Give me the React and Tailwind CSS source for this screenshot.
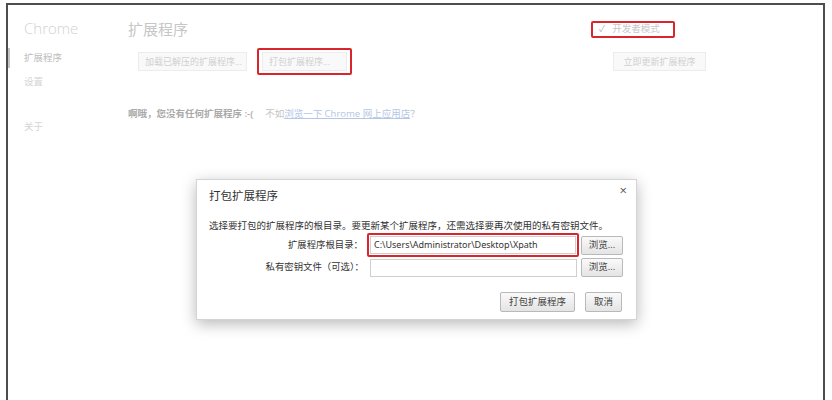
const cjk = { fontFamily: '"Open Sans", "Noto Sans CJK SC", sans-serif' };

function FadedButton({ children, className = "" }) {
  return (
    <div className={`flex h-[19px] items-center whitespace-nowrap border border-[#ececec] bg-[#f9f9f9] px-[6px] text-[9px] text-[#d0d0d0] ${className}`}>
      {children}
    </div>
  );
}

function DialogButton({ children, className = "" }) {
  return (
    <div className={`flex items-center justify-center whitespace-nowrap rounded-[2px] border border-[#b9b9b9] bg-gradient-to-b from-[#fafafa] to-[#e4e4e4] text-[9.5px] text-[#444] ${className}`}>
      {children}
    </div>
  );
}

function PackDialog() {
  return (
    <div className="absolute left-[196px] top-[179px] h-[141px] w-[441px] border border-[#d4d4d4] bg-white pl-[12px] shadow-[0_4px_14px_rgba(0,0,0,0.28)]">
      <div className="absolute right-[9px] top-[4px] text-[13px] leading-none text-[#555]">×</div>
      <div className="pt-[8px] text-[11.5px] leading-[16px] text-[#333]">打包扩展程序</div>
      <div className="mt-[15px] whitespace-nowrap text-[9.5px] leading-[14px] text-[#333]">选择要打包的扩展程序的根目录。要更新某个扩展程序，还需选择要再次使用的私有密钥文件。</div>
      <div className="flex h-[24px] items-center whitespace-nowrap text-[9.4px] text-[#333]">
        <div className="w-[158px] pr-[4px] text-right">扩展程序根目录：</div>
        <div className="h-[24px] w-[212px] rounded-[2px] border-2 border-[#d8262c] p-[1px]">
          <div className="flex h-full items-center border border-[#cfcfcf] px-[3px] text-[9px] text-[#333]" style={{ fontFamily: '"Noto Sans", sans-serif' }}>
            C:\Users\Administrator\Desktop\Xpath
          </div>
        </div>
        <DialogButton className="ml-[2px] h-[19px] w-[42px]">浏览...</DialogButton>
      </div>
      <div className="mt-[1px] flex h-[19px] items-center whitespace-nowrap text-[9.4px] text-[#333]">
        <div className="w-[161px] pr-[6px] text-right">私有密钥文件（可选）：</div>
        <div className="h-[18px] w-[207px] border border-[#cfcfcf]" />
        <DialogButton className="ml-[4px] h-[19px] w-[42px]">浏览...</DialogButton>
      </div>
      <div className="mt-[15px] flex justify-end gap-[10px] pr-[14px]">
        <DialogButton className="h-[20px] w-[75px]">打包扩展程序</DialogButton>
        <DialogButton className="h-[20px] w-[37px]">取消</DialogButton>
      </div>
    </div>
  );
}

export default function App() {
  return (
    <div className="relative h-[400px] w-[832px] overflow-hidden bg-white pl-[6px] pr-[7px] pt-[3px]" style={cjk}>
      <div className="flex h-[400px] border-x-2 border-t-2 border-[#4d4d4d]">
        <aside className="w-[120px] shrink-0">
          <div className="pl-[16px] pt-[13px] text-[15px] font-light leading-[20px] text-[#d2d2d2]">Chrome</div>
          <div className="mt-[10px] flex h-[20px] items-center">
            <div className="h-[20px] w-[2px] bg-[#c4c4c4]" />
            <span className="pl-[14px] text-[9.5px] text-[#bdbdbd]">扩展程序</span>
          </div>
          <div className="mt-[7px] pl-[16px] text-[9.5px] leading-[14px] text-[#d6d6d6]">设置</div>
          <div className="mt-[31px] pl-[16px] text-[9.5px] leading-[14px] text-[#d6d6d6]">关于</div>
        </aside>
        <main className="w-[578px]">
          <div className="flex items-center justify-between pt-[14px]">
            <div className="text-[15px] leading-[20px] text-[#c6c6c6]">扩展程序</div>
            <div className="mr-[31px] flex h-[17px] w-[84px] items-center rounded-[2px] border-2 border-[#d8262c] pl-[6px] text-[9.5px] text-[#c8c8c8]">
              <span className="mr-[7px] text-[9px] text-[#b8b8b8]">✓</span>开发者模式
            </div>
          </div>
          <div className="mt-[9px] flex items-center pl-[10px]">
            <FadedButton className="w-[109px]">加载已解压的扩展程序...</FadedButton>
            <div className="ml-[10px] flex h-[27px] w-[95px] items-center justify-center rounded-[2px] border-2 border-[#d8262c]">
              <FadedButton className="w-[85px]">打包扩展程序...</FadedButton>
            </div>
            <FadedButton className="ml-auto w-[93px] justify-center">立即更新扩展程序</FadedButton>
          </div>
          <div className="mt-[32px] whitespace-nowrap text-[9.5px] text-[#a9a9a9]">
            <span className="font-semibold">啊哦，您没有任何扩展程序 :-(</span>
            <span className="ml-[12px] text-[#c4c4c4]">不如</span>
            <span className="text-[#b4c6e6] underline">浏览一下 Chrome 网上应用店</span>
            <span className="text-[#c4c4c4]">？</span>
          </div>
        </main>
      </div>
      <PackDialog />
    </div>
  );
}
